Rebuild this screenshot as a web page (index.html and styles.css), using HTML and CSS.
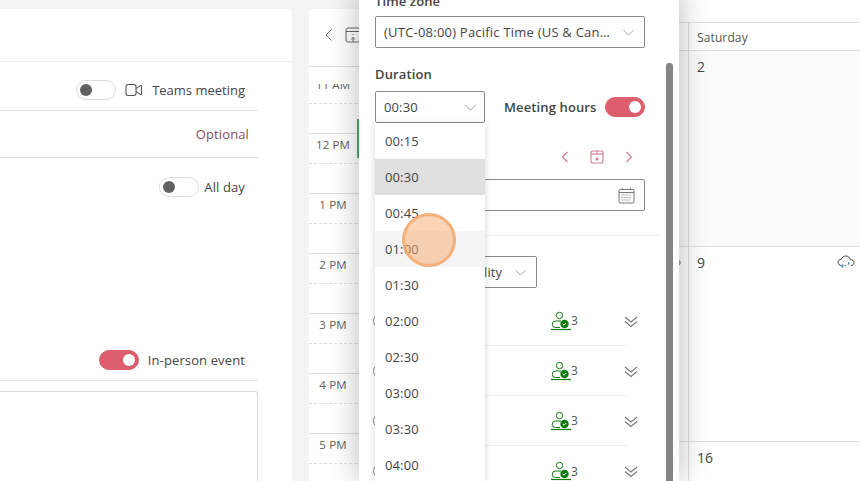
FILE: index.html
```html
<!DOCTYPE html>
<html lang="en">

<head>
    <meta charset="UTF-8">
    <meta name="viewport" content="width=device-width, initial-scale=1.0">
    <title>New event</title>
    <link rel="stylesheet" href="styles.css">
</head>

<body>
    <!-- Event form -->
    <section class="form-card">
        <div class="form-top"></div>
        <div class="form-row row-teams">
            <span class="toggle"></span>
            <svg class="teams-icon" width="18" height="14" viewBox="0 0 18 14" fill="none" stroke="#555" stroke-width="1.1">
                <rect x="1" y="1.5" width="10" height="11" rx="2.2" />
                <path d="M11 5.6 15.2 2.6c.6-.3 1.300 0 1.300.7v7.400c0 .7-.7 1-1.300.7L11 8.400" />
            </svg>
            <span>Teams meeting</span>
        </div>
        <div class="form-row row-optional"><span class="optional">Optional</span></div>
        <div class="form-row row-allday">
            <span class="toggle"></span>
            <span>All day</span>
        </div>
        <div class="form-row row-inperson">
            <span class="toggle on"></span>
            <span>In-person event</span>
        </div>
        <div class="editor"></div>
    </section>

    <section class="calendar-card">
        <!-- Day pane, mostly behind the panel -->
        <div class="day-pane">
            <div class="day-toolbar">
                <svg width="9" height="14" viewBox="0 0 9 14" fill="none" stroke="#777" stroke-width="1">
                    <path d="M7.500 1.500 2 7l5.500 5.500" />
                </svg>
                <svg class="today-icon" width="16" height="16" viewBox="0 0 16 16" fill="none" stroke="#666" stroke-width="1">
                    <rect x="1" y="1" width="14" height="14" rx="2" />
                    <path d="M1 4.500h14M8 7v1M8 10.500v4M6 12.500 8 10.500l2 2" />
                </svg>
            </div>
            <div class="hours">
                <div class="hour"><span class="hour-label">11 AM</span></div>
                <div class="hour"><span class="hour-label">12 PM</span></div>
                <div class="hour"><span class="hour-label">1 PM</span></div>
                <div class="hour"><span class="hour-label">2 PM</span></div>
                <div class="hour"><span class="hour-label">3 PM</span></div>
                <div class="hour"><span class="hour-label">4 PM</span></div>
                <div class="hour"><span class="hour-label">5 PM</span></div>
            </div>
            <span class="event-bar"></span>
        </div>

        <!-- Month pane -->
        <div class="month-pane">
            <div class="month-grid">
                <div class="month-head"></div>
                <div class="month-head sat">Saturday</div>
                <div class="month-cell past"></div>
                <div class="month-cell sat past"><span class="day-num">2</span></div>
                <div class="month-cell">
                    <svg class="weather weather-fri" width="18" height="14" viewBox="0 0 18 14" fill="none" stroke="#444" stroke-width="1">
                        <path d="M4.500 10.500C2.500 10.500 1 9.200 1 7.400s1.400-3 3.200-3C5 2.400 6.700 1 8.800 1c2.400 0 4.200 1.600 4.500 3.600 2 0 3.700 1.200 3.700 3 0 1.700-1.400 2.900-3 2.900" />
                    </svg>
                </div>
                <div class="month-cell sat">
                    <span class="day-num">9</span>
                    <svg class="weather" width="18" height="14" viewBox="0 0 18 14" fill="none" stroke="#444" stroke-width="1">
                        <path d="M4.500 10.500C2.500 10.500 1 9.200 1 7.400s1.400-3 3.200-3C5 2.400 6.700 1 8.800 1c2.400 0 4.200 1.600 4.500 3.600 2 0 3.700 1.200 3.700 3 0 1.700-1.400 2.900-3 2.900" />
                        <path d="M6 9.500 5 12.500M12 7.500 11.500 9.500" stroke="#3a86c8" stroke-width="1.600" />
                        <path d="M8.500 10 8.200 11.500" stroke="#3a86c8" stroke-width="1.200" />
                    </svg>
                </div>
                <div class="month-cell last"></div>
                <div class="month-cell sat last"><span class="day-num">16</span></div>
            </div>
        </div>
    </section>

    <!-- Scheduling assistant panel -->
    <aside class="panel">
        <div class="panel-label clip">Time zone</div>
        <div class="select zone">
            <span class="select-text">(UTC-08:00) Pacific Time (US &amp; Canada)</span>
            <svg class="chev" width="13" height="7" viewBox="0 0 14 8" fill="none" stroke="#999"><path d="M1 1l6 6 6-6" /></svg>
        </div>

        <div class="panel-label duration-label">Duration</div>
        <div class="duration-row">
            <div class="select duration">
                <span class="select-text">00:30</span>
                <svg class="chev" width="13" height="7" viewBox="0 0 14 8" fill="none" stroke="#999"><path d="M1 1l6 6 6-6" /></svg>
            </div>
            <span class="meeting-hours">Meeting hours</span>
            <span class="toggle on"></span>
        </div>

        <div class="date-nav">
            <svg width="8" height="12" viewBox="0 0 8 12" fill="none" stroke="#d07f8f" stroke-width="1.200"><path d="M6.500 1 1.500 6l5 5" /></svg>
            <svg width="14" height="14" viewBox="0 0 14 14" fill="none" stroke="#d07f8f" stroke-width="1.100">
                <rect x="1" y="1" width="12" height="12" rx="2" />
                <path d="M1 4h12" />
                <circle cx="7" cy="9" r="1" fill="#d07f8f" />
                <path d="M7 1v3" />
            </svg>
            <svg width="8" height="12" viewBox="0 0 8 12" fill="none" stroke="#d07f8f" stroke-width="1.200"><path d="M1.500 1l5 5-5 5" /></svg>
        </div>

        <div class="select date">
            <svg class="cal-icon" width="17" height="17" viewBox="0 0 17 17" fill="none" stroke="#777">
                <rect x="1" y="2.500" width="15" height="13.500" rx="1" />
                <path d="M1 5.500h15M4.500 1v2M12.500 1v2" />
                <path d="M3.500 8h10M3.500 10.500h10M3.500 13h10" stroke-dasharray="1 1" />
            </svg>
        </div>

        <div class="panel-divider"></div>

        <div class="select sort">
            <span class="select-text">Sort by availability</span>
            <svg class="chev" width="13" height="7" viewBox="0 0 14 8" fill="none" stroke="#999"><path d="M1 1l6 6 6-6" /></svg>
        </div>

        <div class="slots">
            <div class="slot">
                <span class="radio"></span>
                <svg class="people" width="22" height="20" viewBox="0 0 22 20" fill="none" stroke="#107c10">
                    <circle cx="9.500" cy="4.500" r="3.200" />
                    <path d="M11 10H5.500a3.200 3.200 0 0 0 0 6.500H10" />
                    <circle cx="14.500" cy="13" r="4.200" fill="#107c10" stroke="none" />
                    <path d="M12.800 13l1.200 1.200 2.200-2.200" stroke="#fff" />
                    <path d="M1 18.500h20" stroke-width="1.200" />
                </svg>
                <span class="slot-count">3</span>
                <svg class="expand" width="14" height="12" viewBox="0 0 14 12" fill="none" stroke="#777" stroke-width="1.100"><path d="M1 1l6 5 6-5M1 5.500l6 5 6-5" /></svg>
            </div>
            <div class="slot">
                <span class="radio"></span>
                <svg class="people" width="22" height="20" viewBox="0 0 22 20" fill="none" stroke="#107c10">
                    <circle cx="9.500" cy="4.500" r="3.200" />
                    <path d="M11 10H5.500a3.200 3.200 0 0 0 0 6.500H10" />
                    <circle cx="14.500" cy="13" r="4.200" fill="#107c10" stroke="none" />
                    <path d="M12.800 13l1.200 1.200 2.200-2.200" stroke="#fff" />
                    <path d="M1 18.500h20" stroke-width="1.200" />
                </svg>
                <span class="slot-count">3</span>
                <svg class="expand" width="14" height="12" viewBox="0 0 14 12" fill="none" stroke="#777" stroke-width="1.100"><path d="M1 1l6 5 6-5M1 5.500l6 5 6-5" /></svg>
            </div>
            <div class="slot">
                <span class="radio"></span>
                <svg class="people" width="22" height="20" viewBox="0 0 22 20" fill="none" stroke="#107c10">
                    <circle cx="9.500" cy="4.500" r="3.200" />
                    <path d="M11 10H5.500a3.200 3.200 0 0 0 0 6.500H10" />
                    <circle cx="14.500" cy="13" r="4.200" fill="#107c10" stroke="none" />
                    <path d="M12.800 13l1.200 1.200 2.200-2.200" stroke="#fff" />
                    <path d="M1 18.500h20" stroke-width="1.200" />
                </svg>
                <span class="slot-count">3</span>
                <svg class="expand" width="14" height="12" viewBox="0 0 14 12" fill="none" stroke="#777" stroke-width="1.100"><path d="M1 1l6 5 6-5M1 5.500l6 5 6-5" /></svg>
            </div>
            <div class="slot">
                <span class="radio"></span>
                <svg class="people" width="22" height="20" viewBox="0 0 22 20" fill="none" stroke="#107c10">
                    <circle cx="9.500" cy="4.500" r="3.200" />
                    <path d="M11 10H5.500a3.200 3.200 0 0 0 0 6.500H10" />
                    <circle cx="14.500" cy="13" r="4.200" fill="#107c10" stroke="none" />
                    <path d="M12.800 13l1.200 1.200 2.200-2.200" stroke="#fff" />
                    <path d="M1 18.500h20" stroke-width="1.200" />
                </svg>
                <span class="slot-count">3</span>
                <svg class="expand" width="14" height="12" viewBox="0 0 14 12" fill="none" stroke="#777" stroke-width="1.100"><path d="M1 1l6 5 6-5M1 5.500l6 5 6-5" /></svg>
            </div>
        </div>

        <span class="scrollbar"></span>

        <!-- Open duration list -->
        <ul class="dropdown">
            <li>00:15</li>
            <li class="selected">00:30</li>
            <li>00:45</li>
            <li class="hover">01:00</li>
            <li>01:30</li>
            <li>02:00</li>
            <li>02:30</li>
            <li>03:00</li>
            <li>03:30</li>
            <li>04:00</li>
        </ul>
    </aside>

    <!-- Click marker from the screen recording -->
    <span class="click-marker"></span>
</body>

</html>
```

FILE: styles.css
```css
html {
    overflow: hidden;
}

body {
    font-family: "Open Sans", "Liberation Sans", sans-serif;
    font-size: 13px;
    letter-spacing: 0.12px;
    color: #444;
    background-color: #f4f4f4;
    display: flex;
    gap: 17px;
    height: 481px;
    box-sizing: border-box;
    margin: 0;
    padding-top: 9px;
    overflow: hidden;
    position: relative;
}

/* form card */
.form-card {
    background-color: #fff;
    width: 292px;
    flex-shrink: 0;
    border-radius: 0 4px 0 0;
    display: flex;
    flex-direction: column;
}

.form-card > div {
    flex-shrink: 0;
}

.form-top {
    height: 53px;
    box-sizing: border-box;
    border-bottom: 1px solid #eee;
}

.form-row {
    display: flex;
    align-items: center;
    justify-content: flex-end;
    width: 258px;
    padding-right: 13px;
    box-sizing: border-box;
}

.row-teams {
    height: 49px;
    padding-top: 7px;
    border-bottom: 1px solid #e0e0e0;
    gap: 10px;
    letter-spacing: 0;
}

.teams-icon {
    margin-left: -1px;
    margin-right: -1px;
}

.row-optional {
    height: 47px;
    padding-right: 9px;
    border-bottom: 1px solid #e0e0e0;
}

.optional {
    color: #8d4b58;
}

.row-allday {
    height: 58px;
    gap: 5px;
}

.row-inperson {
    height: 41px;
    margin-top: 124px;
    gap: 9px;
    border-bottom: 1px solid #e0e0e0;
}

.editor {
    width: 258px;
    height: 90px;
    margin-top: 10px;
    border: 1px solid #ddd;
    border-left: none;
    border-bottom: none;
    border-radius: 0 3px 0 0;
    box-sizing: border-box;
}

.toggle {
    width: 40px;
    height: 20px;
    flex-shrink: 0;
    box-sizing: border-box;
    border: 1px solid #ddd;
    border-radius: 10px;
    background-color: #fff;
    display: flex;
    align-items: center;
    padding: 0 3px 0 3px;
}

.toggle::after {
    content: "";
    width: 12px;
    height: 12px;
    border-radius: 50%;
    background-color: #616161;
}

.toggle.on {
    background-color: #dc5f6e;
    border-color: #dc5f6e;
    justify-content: flex-end;
}

.toggle.on::after {
    background-color: #fff;
}

/* calendar card */
.calendar-card {
    flex: 1;
    display: flex;
    background-color: #fff;
    border-radius: 4px 0 0 0;
}

.day-pane {
    width: 300px;
    flex-shrink: 0;
    position: relative;
    display: flex;
    flex-direction: column;
}

.day-toolbar {
    height: 58px;
    box-sizing: border-box;
    border-bottom: 1px solid #ddd;
    display: flex;
    align-items: center;
    gap: 12px;
    padding: 0 0 4px 15px;
}

.hours {
    margin-top: 17px;
    height: 398px;
    overflow: hidden;
}

.hour {
    height: 60px;
    box-sizing: border-box;
    border-bottom: 1px solid #ddd;
    width: 300px;
    padding-top: 3px;
    font-size: 11.5px;
    line-height: 16px;
    color: #616161;
    position: relative;
}

.hour-label {
    display: block;
    width: 48px;
    text-align: center;
}

.hour::after {
    content: "";
    position: absolute;
    left: 0;
    right: 0;
    top: 29px;
    border-top: 1px dashed #ddd;
}

.hour:first-child {
    margin-top: -10px;
}

.event-bar {
    position: absolute;
    left: 48px;
    top: 110px;
    width: 3px;
    height: 39px;
    background-color: #4caf63;
}

.month-pane {
    flex: 1;
    margin-top: -9px;
    padding-top: 22px;
    background-color: #fff;
}

.month-grid {
    display: grid;
    grid-template-columns: 1fr 172px;
    grid-template-rows: 28px 196px 195px 39px;
    border-top: 1px solid #ddd;
}

.month-head,
.month-cell {
    box-sizing: border-box;
    border-bottom: 1px solid #ddd;
    position: relative;
}

.month-cell.last {
    border-bottom: none;
}

.month-head.sat {
    font-size: 12px;
    line-height: 29px;
    color: #555;
    padding-left: 8px;
}

.sat {
    border-left: 1px solid #ddd;
}

.month-cell.past {
    background-color: #fbfbfb;
}

.day-num {
    display: block;
    font-size: 14px;
    padding: 5px 0 0 8px;
    line-height: 22px;
    color: #444;
}

.weather {
    position: absolute;
    right: 5px;
    top: 8px;
}

.weather-fri {
    right: 7px;
}

/* panel over the calendar */
.panel {
    position: absolute;
    left: 359px;
    top: -10px;
    width: 320px;
    height: 491px;
    overflow: hidden;
    background-color: #fff;
    box-sizing: border-box;
    padding: 1px 0 0 16px;
    box-shadow: 0 0 28px rgba(0, 0, 0, 0.28);
}

.panel-label {
    font-weight: 600;
    line-height: 20px;
    color: #444;
}

.select {
    height: 32px;
    box-sizing: border-box;
    border: 1px solid #8a8a8a;
    border-radius: 2px;
    display: flex;
    align-items: center;
    justify-content: space-between;
    padding: 0 9px 0 8px;
}

.select-text {
    white-space: nowrap;
    overflow: hidden;
    text-overflow: ellipsis;
}

.chev {
    flex-shrink: 0;
}

.zone {
    width: 270px;
    margin-top: 5px;
}

.zone .select-text {
    width: 228px;
    letter-spacing: 0.22px;
}

.duration-label {
    margin-top: 16px;
}

.duration-row {
    width: 270px;
    margin-top: 7px;
    display: flex;
    align-items: center;
    justify-content: space-between;
}

.duration {
    width: 110px;
    padding-right: 7px;
}

.meeting-hours {
    font-weight: 600;
    margin-left: 19px;
    margin-right: auto;
}

.date-nav {
    width: 270px;
    height: 24px;
    margin-top: 22px;
    box-sizing: border-box;
    padding-right: 12px;
    display: flex;
    align-items: center;
    justify-content: flex-end;
    gap: 21px;
}

.date {
    width: 270px;
    margin-top: 10px;
    justify-content: flex-end;
}

.panel-divider {
    width: 285px;
    margin-top: 24px;
    border-top: 1px solid #eee;
}

.sort {
    width: 162px;
    margin-top: 20px;
}

.sort .select-text {
    padding-left: 6px;
}

.slots {
    margin-top: 8px;
    width: 254px;
}

.slot {
    height: 50px;
    box-sizing: border-box;
    border-bottom: 1px solid #eee;
    display: flex;
    align-items: center;
}

.slot svg {
    flex-shrink: 0;
}

.slot:last-child {
    border-bottom: none;
}

.radio {
    width: 16px;
    height: 16px;
    flex-shrink: 0;
    margin-left: -2px;
    box-sizing: border-box;
    border: 1px solid #999;
    border-radius: 50%;
}

.people {
    margin-left: 161px;
}

.slot-count {
    font-size: 12px;
    color: #555;
    margin-left: -1px;
}

.expand {
    margin-left: 46px;
    margin-top: 2px;
}

.scrollbar {
    position: absolute;
    left: 307px;
    top: 73px;
    bottom: 0;
    width: 7px;
    background-color: #848484;
    border-radius: 3px 3px 0 0;
}

.dropdown {
    position: absolute;
    left: 16px;
    top: 133px;
    width: 110px;
    height: 358px;
    overflow: hidden;
    margin: 0;
    padding: 0;
    list-style: none;
    background-color: #fff;
    box-shadow: 0 2px 8px rgba(0, 0, 0, 0.16);
}

.dropdown li {
    height: 36px;
    line-height: 36px;
    padding-left: 10px;
    color: #444;
}

.dropdown li.selected {
    background-color: #e0e0e0;
}

.dropdown li.hover {
    background-color: #f5f5f5;
}

.click-marker {
    position: absolute;
    left: 402px;
    top: 213px;
    width: 54px;
    height: 54px;
    box-sizing: border-box;
    border: 3px solid rgba(245, 170, 110, 0.85);
    border-radius: 50%;
    background-color: rgba(248, 170, 110, 0.5);
}
```
